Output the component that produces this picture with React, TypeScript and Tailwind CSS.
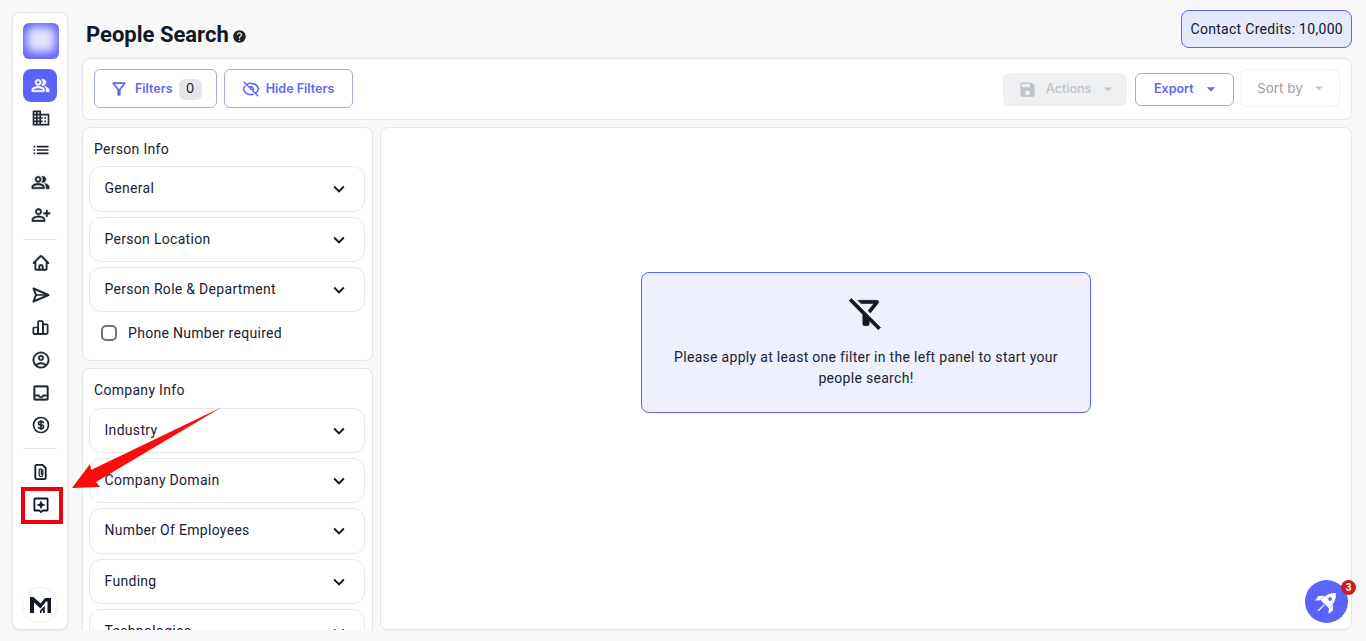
import React from "react";
import { MdOutlinePeopleAlt, MdBusiness, MdList, MdOutlinePersonAddAlt, MdOutlineAccountCircle, MdHelp, MdKeyboardArrowDown, MdArrowDropDown, MdSave, MdOutlineFilterAlt, MdOutlineFilterAltOff, MdOutlineInbox } from "react-icons/md";
import { HiOutlineEyeSlash, HiOutlineHome } from "react-icons/hi2";
import { TbChartBar, TbCoin } from "react-icons/tb";

const DocClip = () => (
  <svg width="18" height="18" viewBox="0 0 18 18" fill="none" stroke="#111827" strokeWidth="1.8" strokeLinejoin="round" strokeLinecap="round">
    <path d="M4.500 1.800h6l3.200 3.200v10a1.200 1.200 0 0 1-1.200 1.200h-8a1.200 1.200 0 0 1-1.200-1.200V3a1.200 1.200 0 0 1 1.200-1.200z" />
    <path d="M10.800 6.500v5.300a1.800 1.800 0 0 1-3.600 0V7a1.100 1.100 0 0 1 2.200 0v4.500" strokeWidth="1.2" />
  </svg>
);

const Spark = () => (
  <svg width="18" height="18" viewBox="0 0 18 18" fill="none" className="mt-[1px]">
    <path d="M3 2.500h12a.6.6 0 0 1 .6.6v10.800a.6.6 0 0 1-.6.6h-4.400L9 16.200l-1.600-1.700H3a.6.6 0 0 1-.6-.6V3.100a.6.6 0 0 1 .6-.6z" stroke="#111827" strokeWidth="1.800" strokeLinejoin="round" />
    <path d="M9 4.300l1.300 3.300 3.300 1.300-3.300 1.300L9 13.500l-1.300-3.300-3.300-1.300 3.300-1.300z" fill="#111827" />
  </svg>
);

const Send = () => (
  <svg width="18" height="18" viewBox="0 0 18 18" fill="none" stroke="#1f2733" strokeWidth="2" strokeLinejoin="round">
    <path d="M1.500 2.500L16.500 9 1.500 15.500 4 9z" />
    <path d="M4 9h12" strokeWidth="1.600" />
  </svg>
);

const Logo = () => (
  <svg width="21" height="16" viewBox="0 0 21 16" fill="#111827">
    <path d="M0 0h3.500L10.500 6.500 15 1h6v15h-3.500V4.500H16L10.500 11.500 4 5.500V16H0z" />
    <path d="M10 16v-2.500l4.800-4.800V16h-1.800v-2.500h-1.300V16z" />
  </svg>
);

const Rocket = () => (
  <svg width="30" height="30" viewBox="0 0 24 24" fill="white" className="rotate-45">
    <path d="M12 2c3.200 2.500 4.800 6.500 4.800 12.500H7.200C7.200 8.500 8.800 4.500 12 2z" />
    <path d="M7 10L3.800 13.500l.6 4.500L7 15z" />
    <path d="M17 10l3.200 3.500-.6 4.500L17 15z" />
    <circle cx="12" cy="8.500" r="1.500" fill="#5b63fb" />
    <path d="M12 15v7" stroke="white" strokeWidth="1" />
  </svg>
);

const Accordion = ({ label, h }: { label: string; h: string }) => (
  <div className={`flex shrink-0 items-center justify-between rounded-xl border border-[#e9e9ea] bg-white pl-[14.500px] pr-[14px] ${h}`}>
    <span className="pb-[2px] text-[14px] leading-5 tracking-[0.3px] text-[#1a2233]">{label}</span>
    <MdKeyboardArrowDown size={22} className="text-[#111827]" />
  </div>
);

const NavIcon = ({ children }: { children: React.ReactNode }) => (
  <div className="flex h-[32.500px] w-[34px] items-center justify-center pl-[1px] text-[#1f2733] [&_path[fill=none]]:stroke-none">{children}</div>
);

export default function App() {
  return (
    <div className="relative flex h-[641px] w-[1366px] gap-[14px] overflow-hidden bg-[#f8f8f8] pb-[11px] pl-3 pr-[14px] pt-3 font-['Roboto',sans-serif]">
      {/* Sidebar */}
      <aside className="flex w-[56px] shrink-0 flex-col items-center rounded-lg border border-[#e5e6e8] bg-white pb-[6px] pt-[10px] shadow-[0_1px_2px_rgba(0,0,0,0.08)]">
        <div className="relative mb-[10px] ml-[2px] h-[36px] w-[36px] overflow-hidden rounded-md bg-[#6468fa]">
          <div className="absolute inset-x-[4px] bottom-[7px] top-[4px] rounded-md bg-[#e2e2fe] blur-[4px]" />
        </div>
        <div className="flex h-[32.500px] w-[34px] items-center justify-center rounded-lg bg-[#5b63fb] pl-[1px] text-white [&_path[fill=none]]:stroke-none">
          <MdOutlinePeopleAlt size={19} strokeWidth={0.6} />
        </div>
        <NavIcon><MdBusiness size={20} /></NavIcon>
        <NavIcon><MdList size={20} /></NavIcon>
        <NavIcon><MdOutlinePeopleAlt size={19} strokeWidth={0.6} /></NavIcon>
        <NavIcon><MdOutlinePersonAddAlt size={20} strokeWidth={0.4} /></NavIcon>
        <div className="my-[7px] h-px w-[34px] bg-[#e2e3e5]" />
        <NavIcon><HiOutlineHome size={18} strokeWidth={2.5} /></NavIcon>
        <NavIcon><Send /></NavIcon>
        <NavIcon><TbChartBar size={19} strokeWidth={2.2} /></NavIcon>
        <NavIcon><MdOutlineAccountCircle size={20} strokeWidth={0.3} /></NavIcon>
        <NavIcon><MdOutlineInbox size={20} strokeWidth={0.4} /></NavIcon>
        <NavIcon><TbCoin size={20} strokeWidth={2} /></NavIcon>
        <div className="my-[6.500px] h-px w-[34px] bg-[#e2e3e5]" />
        <NavIcon><DocClip /></NavIcon>
        <NavIcon><Spark /></NavIcon>
        <div className="mt-auto flex h-[36px] w-[36px] items-center justify-center rounded-full border border-[#f0f0f0] bg-white">
          <Logo />
        </div>
      </aside>

      {/* Main */}
      <main className="flex min-h-0 min-w-0 flex-1 flex-col">
        <header className="flex h-[38px] shrink-0 items-start justify-between">
          <div className="flex items-center gap-[3px] pl-[4px] pt-[9px]">
            <h1 className="text-[22px] font-bold leading-7 text-[#111827]">People Search</h1>
            <MdHelp size={15} className="mt-[2px] text-[#222]" />
          </div>
          <div className="-mt-[2px] flex h-[38px] items-center rounded-lg border border-[#5b63fb] bg-[#e6e8fb] px-2 text-[14px] tracking-[0.3px] text-[#111827]">
            Contact Credits: 10,000
          </div>
        </header>

        <div className="mt-2 flex h-[62px] shrink-0 items-center justify-between rounded-lg border border-[#e5e6e8] bg-white pl-[11px] pr-[11px]">
          <div className="-mt-[2px] flex gap-[7px] font-['Inter',sans-serif]">
            <button className="flex h-[39px] w-[123px] items-center rounded-md border border-[#a4a8fb] pl-[14px] pt-[2px] text-[12.500px] font-semibold text-[#5f66f6]">
              <MdOutlineFilterAlt size={20} />
              <span className="ml-[6px]">Filters</span>
              <span className="ml-[6px] flex h-[21px] w-[23px] items-center justify-center rounded-md bg-[#e5e6e8] text-[13px] font-normal text-[#111827]">0</span>
            </button>
            <button className="flex h-[39px] w-[129px] items-center justify-center gap-[6px] rounded-md border border-[#a4a8fb] pr-[1px] pt-[2px] text-[12.500px] font-semibold text-[#5f66f6]">
              <HiOutlineEyeSlash size={18} strokeWidth={2} />
              Hide Filters
            </button>
          </div>
          <div className="flex items-center gap-2 font-['Inter',sans-serif]">
            <button className="flex h-[33px] w-[124px] items-center rounded-md bg-[#eff0f2] pl-[15px] text-[12.500px] font-medium text-[#bfc2c7]">
              <MdSave size={19} />
              <span className="ml-[9px]">Actions</span>
              <MdArrowDropDown size={18} className="ml-[8px]" />
            </button>
            <button className="flex h-[33px] w-[99px] items-center rounded-md border border-[#a4a8fb] pl-[18px] text-[12.500px] font-semibold text-[#5f66f6]">
              Export
              <MdArrowDropDown size={20} className="ml-[7px]" />
            </button>
            <button className="-ml-[1px] -mt-[2px] flex h-[38px] w-[99px] items-center rounded-md border border-[#eeeff1] pl-[15px] text-[13.500px] text-[#9a9da3]">
              Sort by
              <MdArrowDropDown size={18} className="ml-[7px] text-[#c5c7cb]" />
            </button>
          </div>
        </div>

        <div className="mt-[7px] flex min-h-0 flex-1 gap-[7px]">
          <div className="flex w-[291px] shrink-0 flex-col gap-[7px] overflow-hidden">
            <section className="flex h-[234px] shrink-0 flex-col rounded-lg border border-[#e5e6e8] bg-white pl-[6px] pr-[7px]">
              <div className="pb-[7px] pl-[5px] pt-[11px] text-[14px] leading-5 tracking-[0.3px] text-[#1a2233]">Person Info</div>
              <div className="flex flex-col gap-[5px]">
                <Accordion label="General" h="h-[46px]" />
                <Accordion label="Person Location" h="h-[45px]" />
                <Accordion label="Person Role & Department" h="h-[45px]" />
              </div>
              <label className="mt-[11px] flex items-center gap-[11.500px] pl-[11.500px]">
                <span className="h-4 w-4 rounded-[5px] border-2 border-[#6b7280] bg-white" />
                <span className="text-[14px] leading-5 tracking-[0.3px] text-[#1a2233]">Phone Number required</span>
              </label>
            </section>
            <section className="flex flex-1 flex-col overflow-hidden rounded-t-lg border border-b-0 border-[#e5e6e8] bg-white pl-[6px] pr-[7px]">
              <div className="pb-[8px] pl-[5px] pt-[11px] text-[14px] leading-5 tracking-[0.3px] text-[#1a2233]">Company Info</div>
              <div className="flex flex-col gap-[5px]">
                <Accordion label="Industry" h="h-[45px]" />
                <Accordion label="Company Domain" h="h-[45px]" />
                <Accordion label="Number Of Employees" h="h-[46px]" />
                <Accordion label="Funding" h="h-[45px]" />
                <Accordion label="Technologies" h="h-[45px]" />
              </div>
            </section>
          </div>

          <div className="flex flex-1 items-center justify-center rounded-lg border border-[#e5e6e8] bg-white">
            <div className="mb-[72px] flex h-[141px] w-[450px] flex-col items-center rounded-lg border border-[#5b63fb] bg-[#eef0fe] pt-[21px] [&_path[fill=none]]:stroke-none">
              <MdOutlineFilterAltOff size={38} strokeWidth={0.4} className="text-[#111827]" />
              <p className="mt-[15px] w-[400px] text-center text-[14px] leading-[21px] tracking-[0.3px] text-[#1a2233]">
                Please apply at least one filter in the left panel to start your people search!
              </p>
            </div>
          </div>
        </div>
      </main>

      {/* Floating help launcher */}
      <div className="absolute left-[1305px] top-[580px] flex h-[43px] w-[43px] items-center justify-center rounded-full bg-[#5b63fb] text-white">
        <Rocket />
        <span className="absolute left-[36px] top-0 flex h-[15px] w-[15px] items-center justify-center rounded-full bg-[#d0191f] text-[10px] font-bold text-white">3</span>
      </div>

      {/* Annotation */}
      <div className="absolute left-[21px] top-[487px] h-[37px] w-[42px] border-[4px] border-[#f0000f]" />
      <svg className="absolute left-[60px] top-[400px]" width="170" height="95" viewBox="0 0 170 95">
        <path d="M162 7 L31 70 L30 64 L12 88 L40 87 L36 82 Z" fill="#fb0d0d" />
      </svg>
    </div>
  );
}
